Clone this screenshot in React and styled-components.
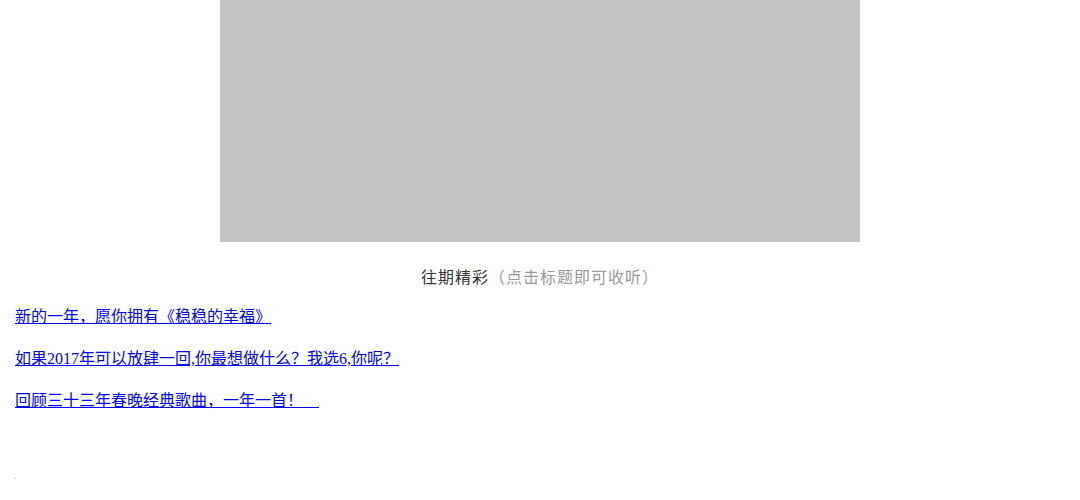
import React from 'react';
import styled, { createGlobalStyle } from 'styled-components';

const GlobalStyle = createGlobalStyle`
  html, body {
    margin: 0;
    padding: 0;
    background: #fff;
  }
`;

const links = [
  '新的一年，愿你拥有《稳稳的幸福》',
  '如果2017年可以放肆一回,你最想做什么？我选6,你呢？',
  '回顾三十三年春晚经典歌曲，一年一首！　',
];

const App = () => {
  return (
    <Page>
      <GlobalStyle />
      <Cover />
      <Caption>
        往期精彩<Hint>（点击标题即可收听）</Hint>
      </Caption>
      <LinkList>
        {links.map(text => (
          <LinkRow key={text}>
            <a href="#">{text}</a>
          </LinkRow>
        ))}
      </LinkList>
      <Dot />
    </Page>
  );
};
export default App;

const Page = styled.div`
  width: 1080px;
  padding: 0 15px;
  box-sizing: border-box;
`;

const Cover = styled.div`
  width: 640px;
  height: 242px;
  margin: 0 auto;
  background: #c3c3c3;
`;

const Caption = styled.p`
  margin: 21px 0 0;
  line-height: 26px;
  text-align: center;
  font-family: 'Noto Sans CJK SC', 'Liberation Sans', sans-serif;
  font-size: 16px;
  letter-spacing: 1px;
  color: #333;
`;

const Hint = styled.span`
  color: #999;
`;

const LinkList = styled.div`
  margin-top: 15px;
`;

const LinkRow = styled.p`
  margin: 0 0 16px;
  line-height: 26px;
  font-family: 'Liberation Serif', 'Noto Sans CJK SC', serif;
  font-size: 16px;
  white-space: pre;

  a {
    color: #0000ee;
    text-decoration: underline;
  }
`;

const Dot = styled.div`
  width: 1px;
  height: 1px;
  margin-top: 64px;
  background: #bbb;
`;
